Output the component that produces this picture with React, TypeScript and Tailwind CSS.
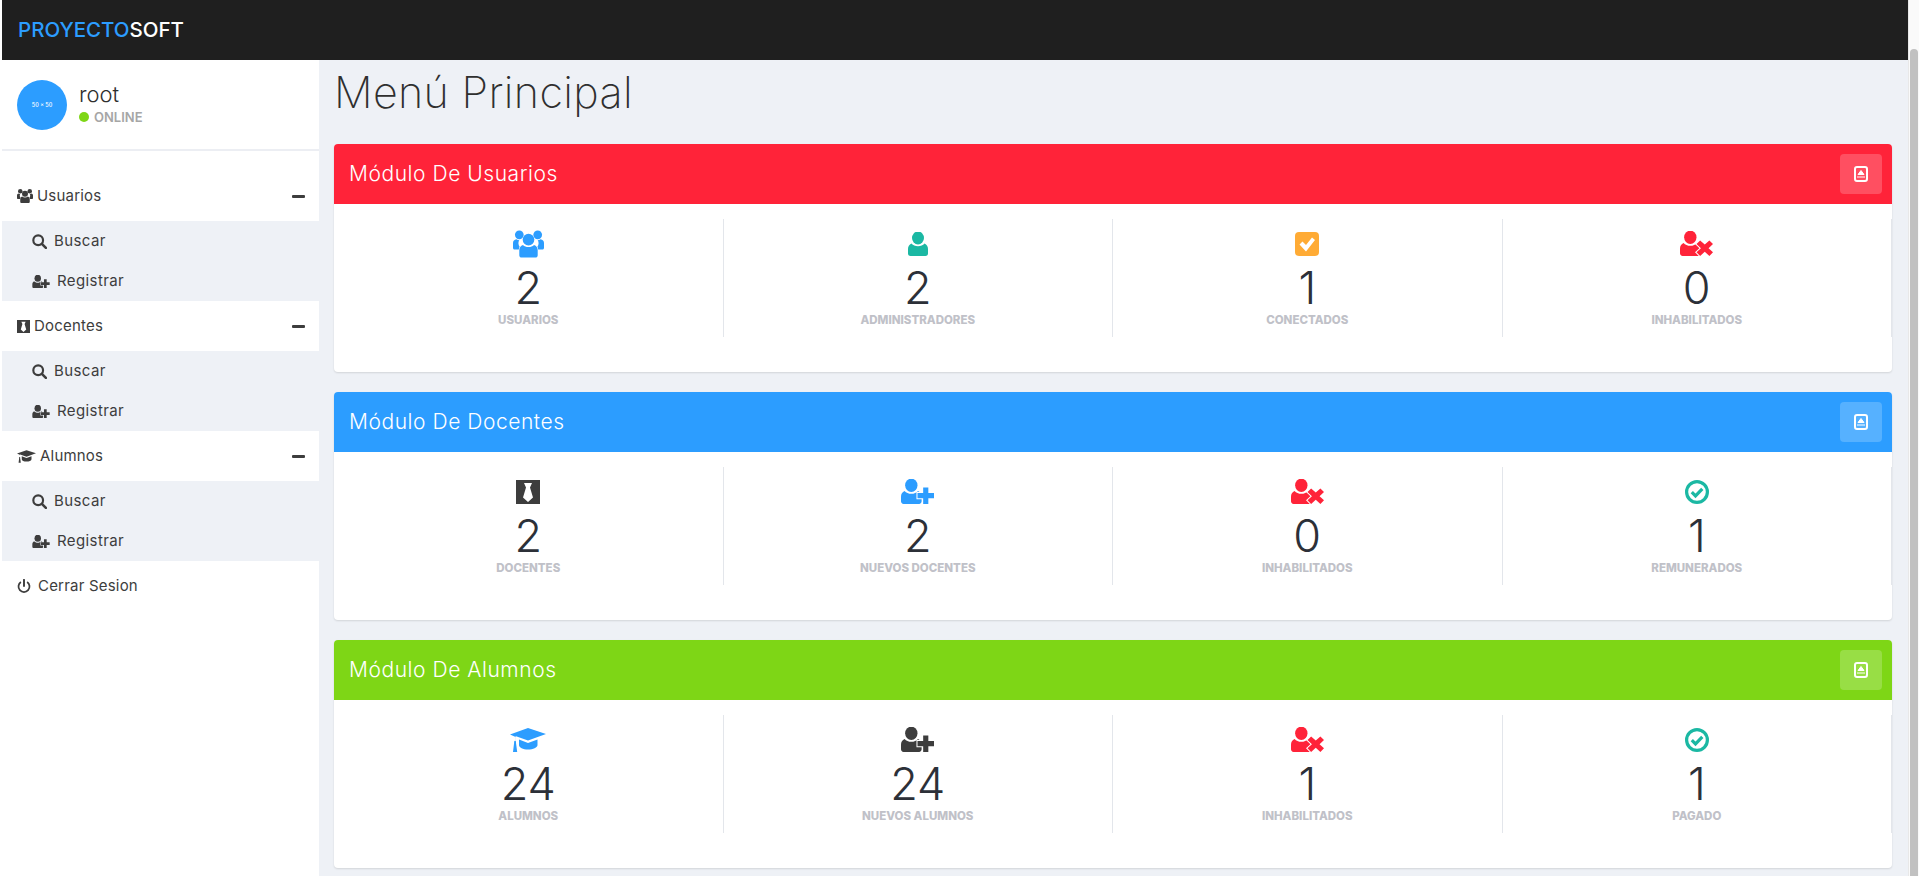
import type { ReactNode } from "react";

const font = "font-['Inter','Liberation_Sans',sans-serif]";

// icons drawn by hand, the package ones have other shapes
const UsersIcon = ({ className }: { className?: string }) => (
  <svg viewBox="0 0 32 28" className={className} fill="currentColor" aria-hidden="true">
    <circle cx="6.500" cy="4.500" r="4.500" />
    <circle cx="25.500" cy="4.500" r="4.500" />
    <path d="M0 17v-4c0-2.400 1.400-3.600 3.500-4 1 .8 2 1.200 3 1.200-.7 1.100-1 2.200-.9 3.300.1 1.200.5 2.400 1.200 3.300-.5.900-.8 1.900-.8 3H2c-1.200 0-2-.8-2-2zM32 17v-4c0-2.400-1.400-3.600-3.500-4-1 .8-2 1.200-3 1.200.7 1.100 1 2.200.9 3.300-.1 1.200-.5 2.400-1.200 3.300.5.900.8 1.900.8 3H30c1.200 0 2-.8 2-2z" />
    <circle cx="16" cy="9.500" r="6" />
    <path d="M10.300 15c1.400 1.400 3.400 2.200 5.700 2.200s4.300-.8 5.700-2.200c2.500 1 3.800 2.800 3.800 5.300v5.200c0 1.500-1 2.500-2.500 2.500H9c-1.500 0-2.500-1-2.500-2.500v-5.200c0-2.500 1.300-4.300 3.800-5.300z" />
  </svg>
);

const UserIcon = ({ className }: { className?: string }) => (
  <svg viewBox="0 0 20 24" className={className} fill="currentColor" aria-hidden="true">
    <ellipse cx="10" cy="6" rx="6" ry="6.500" />
    <path d="M3.500 11.500c1.500 1.700 3.800 2.800 6.500 2.800s5-1.100 6.500-2.800C18.800 12.500 20 14.500 20 17v4.500c0 1.500-1 2.500-2.500 2.500h-15C1 24 0 23 0 21.500V17c0-2.500 1.200-4.500 3.500-5.500z" />
  </svg>
);

const Bust = () => (
  <>
    <ellipse cx="10" cy="6" rx="6" ry="6.500" />
    <path d="M3.500 11.500c1.500 1.700 3.800 2.800 6.500 2.800s5-1.100 6.500-2.800C18.800 12.500 20 14.500 20 17v4.500c0 1.500-1 2.500-2.500 2.500h-15C1 24 0 23 0 21.500V17c0-2.500 1.200-4.500 3.500-5.500z" />
  </>
);

const UserPlusIcon = ({ className, cut = "#ffffff" }: { className?: string; cut?: string }) => (
  <svg viewBox="0 0 32 24" className={className} fill="currentColor" aria-hidden="true">
    <Bust />
    <path d="M21.500 8h5v5.500H32v5h-5.500V24h-5v-5.500H16v-5h5.500z" stroke={cut} strokeWidth="2" paintOrder="stroke" />
  </svg>
);

const UserXIcon = ({ className, cut = "#ffffff" }: { className?: string; cut?: string }) => (
  <svg viewBox="0 0 32 24" className={className} fill="currentColor" aria-hidden="true">
    <Bust />
    <path d="M19.500 9l4.500 4 4.500-4 3.500 3.500-4.300 4 4.300 4-3.500 3.500-4.500-4-4.500 4-3.500-3.500 4.300-4-4.300-4z" stroke={cut} strokeWidth="2" paintOrder="stroke" />
  </svg>
);

const TieIcon = ({ className }: { className?: string }) => (
  <svg viewBox="0 0 24 24" className={className} aria-hidden="true">
    <path d="M0 0h24v24H0z" fill="currentColor" />
    <path d="M8 3h8l-2 4.500 3 10-5 4.500-5-4.500 3-10z" fill="#fff" />
  </svg>
);

const CheckSquareIcon = ({ className }: { className?: string }) => (
  <svg viewBox="0 0 24 24" className={className} aria-hidden="true">
    <rect width="24" height="24" rx="4" fill="currentColor" />
    <path d="M4.500 12.500l3-3 3.500 3.500 6-7.500 3 2.500-9 11.500z" fill="#fff" />
  </svg>
);

const CheckCircleIcon = ({ className }: { className?: string }) => (
  <svg viewBox="0 0 24 24" className={className} fill="none" aria-hidden="true">
    <circle cx="12" cy="12" r="10.400" stroke="currentColor" strokeWidth="3.200" />
    <path d="M6.800 12.200l3.700 3.700 6.800-7" stroke="currentColor" strokeWidth="3.200" />
  </svg>
);

const CapIcon = ({ className }: { className?: string }) => (
  <svg viewBox="0 0 36 24" className={className} fill="currentColor" aria-hidden="true">
    <path d="M18 0l18 6-18 6.500-12-4.300L5 9v3.500l1 1V15l1.200 9H3l1.100-9v-1.500l1-1V8.800L0 6.500z" />
    <path d="M9 11.500l9 3.500 9.500-3.500V17c0 2.500-4.500 4.500-9.500 4.500S9 19.500 9 17z" />
  </svg>
);

const SearchIcon = ({ className }: { className?: string }) => (
  <svg viewBox="0 0 16 16" className={className} fill="none" aria-hidden="true">
    <circle cx="6.600" cy="6.600" r="5.200" stroke="currentColor" strokeWidth="2.300" />
    <path d="M10.500 10.500l4.300 4.300" stroke="currentColor" strokeWidth="2.700" strokeLinecap="round" />
  </svg>
);

const PowerIcon = ({ className }: { className?: string }) => (
  <svg viewBox="0 0 16 16" className={className} fill="none" aria-hidden="true">
    <path d="M4.400 3.400a6.300 6.300 0 1 0 7.200 0" stroke="currentColor" strokeWidth="2" />
    <path d="M8 1v7" stroke="currentColor" strokeWidth="2.200" strokeLinecap="round" />
  </svg>
);

const CollapseIcon = () => (
  <svg viewBox="0 0 14 16" className="h-[16px] w-[14px] text-white" fill="none" aria-hidden="true">
    <rect x="1" y="1" width="12" height="14" rx="2" stroke="currentColor" strokeWidth="2" />
    <path d="M7 4.500l3 4H4z M3 11h8" fill="currentColor" stroke="currentColor" strokeWidth="1" />
  </svg>
);

const SideSection = ({ icon, label }: { icon: ReactNode; label: string }) => (
  <>
    <div className="flex h-[50px] items-center pl-[15px] pr-[14px] text-[15px] tracking-[0.2px] text-[#3d3d3d]">
      {icon}
      <span className="ml-[4px] flex-1">{label}</span>
      <span className="h-[3px] w-[13px] rounded-[1px] bg-[#3d3d3d]" />
    </div>
    <div className="flex h-[80px] flex-col justify-center bg-[#eef1f6] pl-[30px] text-[15px] tracking-[0.4px] text-[#3d3d3d]">
      <div className="flex h-[40px] items-center gap-[7px]">
        <SearchIcon className="h-[15px] w-[15px]" />
        <span>Buscar</span>
      </div>
      <div className="flex h-[40px] items-center gap-[7px]">
        <UserPlusIcon className="h-[13px] w-[18px]" cut="#eef1f6" />
        <span>Registrar</span>
      </div>
    </div>
  </>
);

type Stat = { icon: ReactNode; value: string; label: string };

const Panel = ({ title, headerClass, buttonClass, stats }: { title: string; headerClass: string; buttonClass: string; stats: Stat[] }) => (
  <section className="mb-[20px] rounded-[4px] bg-white shadow-[0_1px_2px_rgba(0,0,0,0.12)]">
    <header className={`flex h-[60px] items-center justify-between rounded-t-[4px] pl-[15px] pr-[10px] ${headerClass}`}>
      <h2 className="text-[21px] font-light tracking-[0.55px] text-white">{title}</h2>
      <span className={`flex h-[40px] w-[42px] items-center justify-center rounded-[4px] ${buttonClass}`}>
        <CollapseIcon />
      </span>
    </header>
    <div className="grid h-[168px] grid-cols-4 items-start pt-[15px]">
      {stats.map((s) => (
        <div key={s.label} className="flex h-[118px] flex-col items-center border-r border-[#e3e6eb] pt-[11px]">
          <div className="flex h-[27px] items-center justify-center">{s.icon}</div>
          <div className="mt-[4px] h-[54px] text-[45px] leading-[54px] font-light text-[#2c3038]">{s.value}</div>
          <div className="-mt-[3px] text-[11.500px] font-extrabold text-[#c0c1c8]">{s.label}</div>
        </div>
      ))}
    </div>
  </section>
);

export default function App() {
  return (
    <div className={`${font} flex h-[876px] flex-col overflow-hidden bg-white`}>
      <div className="flex min-h-0 flex-1">
        <div className="flex min-w-0 flex-1 flex-col pl-[2px]">
          <nav className="flex h-[60px] shrink-0 items-center bg-[#1f1f1f] pl-[16px] text-[20.500px] font-medium">
            <span className="text-[#2c9dff]">PROYECTO</span>
            <span className="text-white">SOFT</span>
          </nav>
          <div className="flex min-h-0 flex-1 bg-[#eef1f6]">
            <aside className="w-[317px] shrink-0 bg-white">
              <div className="flex h-[91px] items-start border-b-2 border-[#eceef3] pl-[15px] pt-[20px]">
                <div className="flex h-[50px] w-[50px] items-center justify-center rounded-full bg-[#2c9dff] text-[5.500px] font-medium text-white">
                  50 x 50
                </div>
                <div className="ml-[12px] pt-[1px]">
                  <div className="text-[22px] leading-[26px] font-light text-[#2f2f2f]">root</div>
                  <div className="mt-[2px] flex items-center gap-[5px] text-[13px] leading-[16px] font-semibold text-[#a6a6a6]">
                    <span className="h-[10px] w-[10px] rounded-full bg-[#7ed616]" />
                    ONLINE
                  </div>
                </div>
              </div>
              <div className="pt-[20px]">
                <SideSection icon={<UsersIcon className="h-[14px] w-[16px]" />} label="Usuarios" />
                <SideSection icon={<TieIcon className="h-[13px] w-[13px]" />} label="Docentes" />
                <SideSection icon={<CapIcon className="h-[13px] w-[19px]" />} label="Alumnos" />
                <div className="flex h-[50px] items-center gap-[7px] pl-[15px] text-[15px] tracking-[0.2px] text-[#3d3d3d]">
                  <PowerIcon className="h-[14px] w-[14px]" />
                  <span>Cerrar Sesion</span>
                </div>
              </div>
            </aside>
            <main className="min-w-0 flex-1 pl-[15px] pr-[16px]">
              <h1 className="h-[84px] pt-[7px] text-[43px] leading-[50px] font-extralight tracking-[0.35px] text-[#2f2f2f]">Menú Principal</h1>
              <Panel
                title="Módulo De Usuarios"
                headerClass="bg-[#ff2339]"
                buttonClass="bg-[#ff4f61]"
                stats={[
                  { icon: <UsersIcon className="h-[28px] w-[31px] text-[#2c9dff]" />, value: "2", label: "USUARIOS" },
                  { icon: <UserIcon className="h-[24px] w-[20px] text-[#1bb8a3]" />, value: "2", label: "ADMINISTRADORES" },
                  { icon: <CheckSquareIcon className="h-[24px] w-[24px] text-[#ffab35]" />, value: "1", label: "CONECTADOS" },
                  { icon: <UserXIcon className="h-[25px] w-[33px] text-[#ff2339]" />, value: "0", label: "INHABILITADOS" },
                ]}
              />
              <Panel
                title="Módulo De Docentes"
                headerClass="bg-[#2c9dff]"
                buttonClass="bg-[#56b1ff]"
                stats={[
                  { icon: <TieIcon className="h-[24px] w-[24px] text-[#3d3d3d]" />, value: "2", label: "DOCENTES" },
                  { icon: <UserPlusIcon className="h-[25px] w-[33px] text-[#2c9dff]" />, value: "2", label: "NUEVOS DOCENTES" },
                  { icon: <UserXIcon className="h-[25px] w-[33px] text-[#ff2339]" />, value: "0", label: "INHABILITADOS" },
                  { icon: <CheckCircleIcon className="h-[24px] w-[24px] text-[#1bb8a3]" />, value: "1", label: "REMUNERADOS" },
                ]}
              />
              <Panel
                title="Módulo De Alumnos"
                headerClass="bg-[#7ed616]"
                buttonClass="bg-[#98de45]"
                stats={[
                  { icon: <CapIcon className="h-[24px] w-[36px] text-[#2c9dff]" />, value: "24", label: "ALUMNOS" },
                  { icon: <UserPlusIcon className="h-[25px] w-[33px] text-[#3d3d3d]" />, value: "24", label: "NUEVOS ALUMNOS" },
                  { icon: <UserXIcon className="h-[25px] w-[33px] text-[#ff2339]" />, value: "1", label: "INHABILITADOS" },
                  { icon: <CheckCircleIcon className="h-[24px] w-[24px] text-[#1bb8a3]" />, value: "1", label: "PAGADO" },
                ]}
              />
            </main>
          </div>
        </div>
        <div className="flex w-[11px] shrink-0 justify-center border-l border-[#e8e8e8] bg-[#fafafa] pt-[49px]">
          <div className="h-[827px] w-[8px] rounded-t-[4px] bg-[#c1c1c1]" />
        </div>
      </div>
    </div>
  );
}
